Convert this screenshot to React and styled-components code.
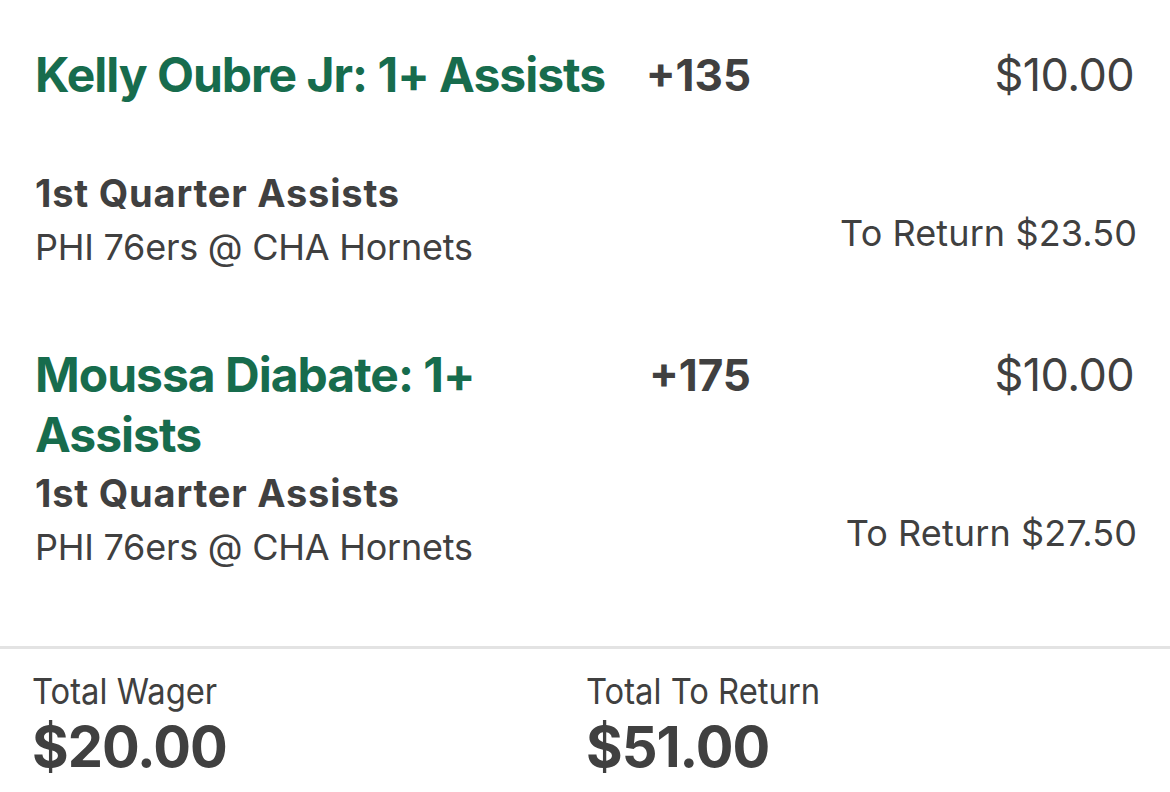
import React from "react";
import styled, { createGlobalStyle } from "styled-components";

const Global = createGlobalStyle`
  html, body { margin: 0; padding: 0; background: #ffffff; }
  body { font-family: Inter, "Noto Sans", "Liberation Sans", sans-serif; color: #404040; -webkit-font-smoothing: antialiased; }
`;

const Page = styled.div`
  width: 1170px;
  height: 792px;
  background: #fff;
  display: flex;
  flex-direction: column;
  overflow: hidden;
`;

const List = styled.div`
  display: flex;
  flex-direction: column;
  padding: 45px 36px 0 35px;
  flex: 1;
`;

const Bet = styled.div`
  display: grid;
  grid-template-columns: 590px 126px 1fr;
  grid-template-rows: 120px auto;
  align-content: start;
  height: 300px;
`;

const Title = styled.div`
  font-size: 48px;
  font-weight: 700;
  line-height: 60px;
  color: #176c4d;
  letter-spacing: -1px;
`;

const Odds = styled.div`
  font-size: 44px;
  font-weight: 700;
  line-height: 60px;
  text-align: right;
  color: #404040;
`;

const Stake = styled.div`
  font-size: 45px;
  font-weight: 400;
  line-height: 60px;
  text-align: right;
  color: #404040;
  letter-spacing: -0.6px;
`;

const Details = styled.div`
  grid-column: 1 / 3;
  display: flex;
  flex-direction: column;
`;

const Market = styled.div`
  font-size: 38px;
  font-weight: 700;
  line-height: 56px;
  color: #404040;
  letter-spacing: 0.8px;
`;

const Event = styled.div`
  font-size: 36px;
  font-weight: 400;
  line-height: 52px;
  color: #404040;
  letter-spacing: -0.25px;
`;

const Return = styled.div`
  align-self: end;
  margin: 0 -3px 18px 0;
  font-size: 36px;
  line-height: 44px;
  font-weight: 400;
  text-align: right;
  color: #404040;
  letter-spacing: 0.1px;
`;

const Footer = styled.div`
  border-top: 3px solid #e3e3e3;
  display: grid;
  grid-template-columns: 554px 1fr;
  padding: 19px 0 0 32px;
  height: 146px;
  box-sizing: border-box;
`;

const Summary = styled.div`
  display: flex;
  flex-direction: column;
`;

const SummaryLabel = styled.div`
  font-size: 36px;
  line-height: 46px;
  font-weight: 400;
  color: #404040;
  transform: scaleX(0.91);
  transform-origin: left;
`;

const SummaryValue = styled.div`
  font-size: 56px;
  line-height: 66px;
  font-weight: 700;
  color: #404040;
  letter-spacing: -1px;
`;

const bets = [
  { title: "Kelly Oubre Jr: 1+ Assists", odds: "+135", stake: "$10.00", market: "1st Quarter Assists", event: "PHI 76ers @ CHA Hornets", ret: "$23.50" },
  { title: "Moussa Diabate: 1+ Assists", odds: "+175", stake: "$10.00", market: "1st Quarter Assists", event: "PHI 76ers @ CHA Hornets", ret: "$27.50" },
];

export default function App() {
  return (
    <Page>
      <Global />
      <List>
        {bets.map((b, i) => (
          <Bet key={i}>
            <Title>{b.title}</Title>
            <Odds>{b.odds}</Odds>
            <Stake>{b.stake}</Stake>
            <Details>
              <Market>{b.market}</Market>
              <Event>{b.event}</Event>
            </Details>
            <Return>To Return {b.ret}</Return>
          </Bet>
        ))}
      </List>
      <Footer>
        <Summary>
          <SummaryLabel>Total Wager</SummaryLabel>
          <SummaryValue>$20.00</SummaryValue>
        </Summary>
        <Summary>
          <SummaryLabel>Total To Return</SummaryLabel>
          <SummaryValue>$51.00</SummaryValue>
        </Summary>
      </Footer>
    </Page>
  );
}
